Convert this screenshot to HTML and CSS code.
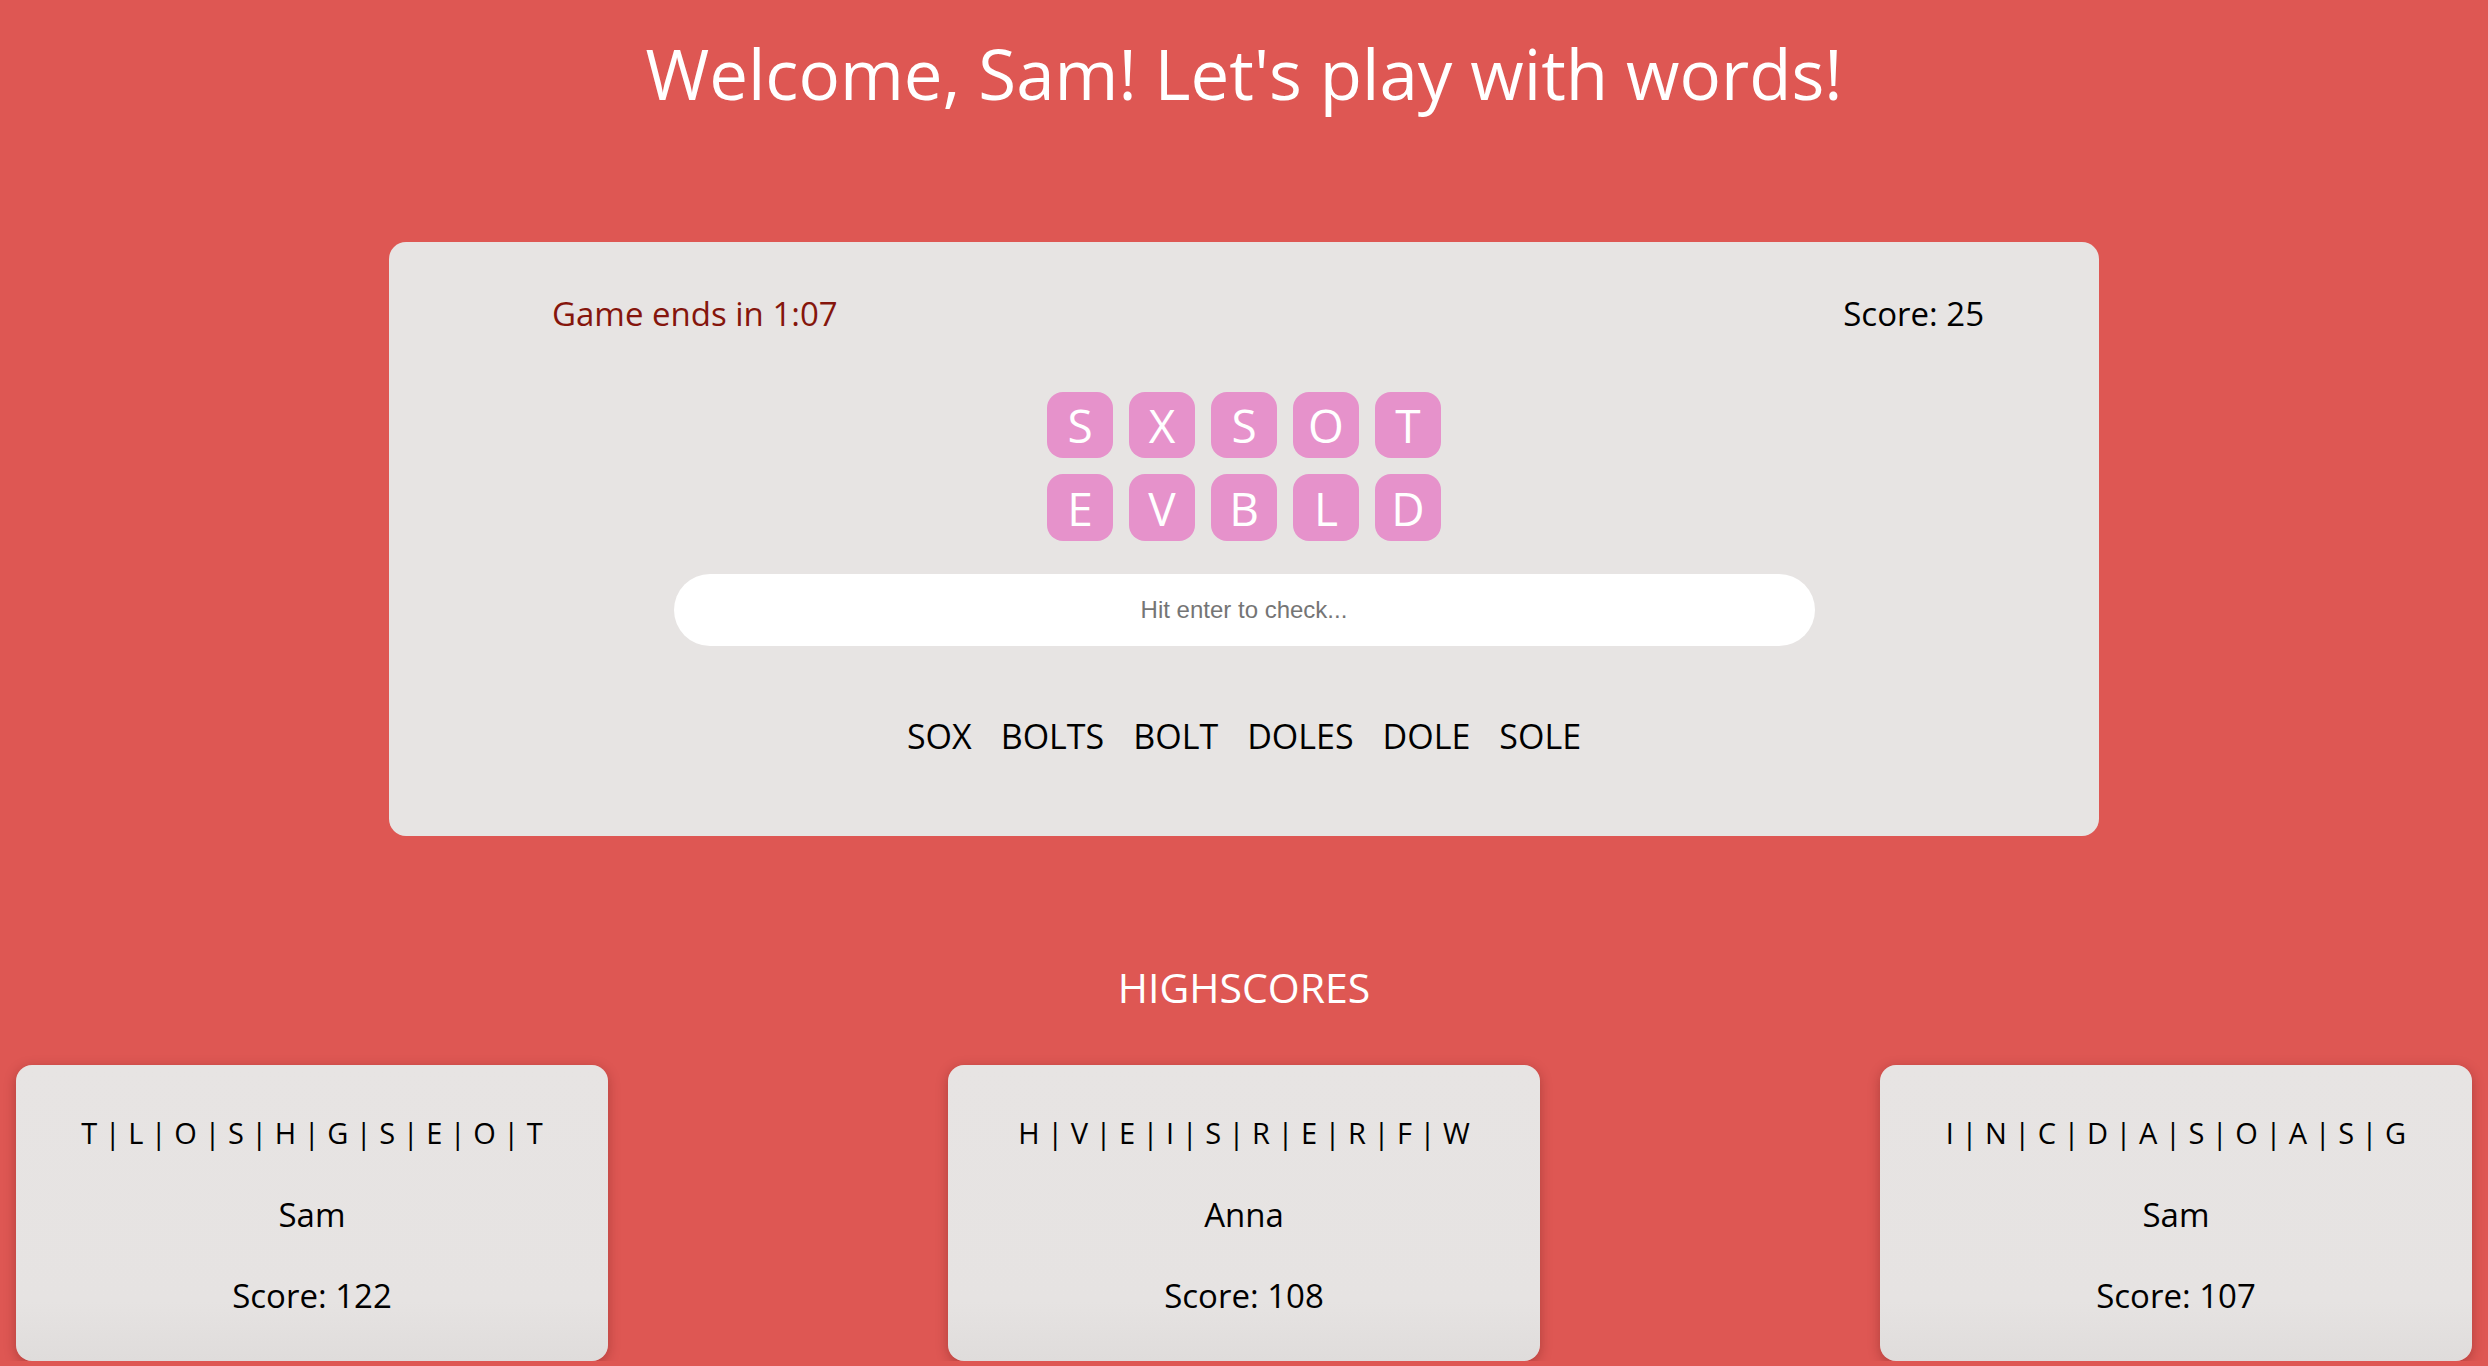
FILE: index.html
```html
<!DOCTYPE html>
<html lang="en">
<head>
<meta charset="utf-8">
<title>Word game</title>
<link rel="stylesheet" href="styles.css">
</head>
<body>
  <h1 class="title">Welcome, Sam! Let's play with words!</h1>

  <main class="game">
    <div class="game-head">
      <span class="timer">Game ends in 1:07</span>
      <span class="score">Score: 25</span>
    </div>
    <div class="tiles">
      <div class="tile-row">
        <span class="tile">S</span>
        <span class="tile">X</span>
        <span class="tile">S</span>
        <span class="tile">O</span>
        <span class="tile">T</span>
      </div>
      <div class="tile-row">
        <span class="tile">E</span>
        <span class="tile">V</span>
        <span class="tile">B</span>
        <span class="tile">L</span>
        <span class="tile">D</span>
      </div>
    </div>
    <input class="guess" type="text" placeholder="Hit enter to check...">
    <ul class="words">
      <li>SOX</li>
      <li>BOLTS</li>
      <li>BOLT</li>
      <li>DOLES</li>
      <li>DOLE</li>
      <li>SOLE</li>
    </ul>
  </main>

  <h2 class="hs-title">HIGHSCORES</h2>

  <section class="hs-list">
    <div class="hs-card">
      <div class="hs-letters">T | L | O | S | H | G | S | E | O | T</div>
      <div class="hs-name">Sam</div>
      <div class="hs-score">Score: 122</div>
    </div>
    <div class="hs-card">
      <div class="hs-letters">H | V | E | I | S | R | E | R | F | W</div>
      <div class="hs-name">Anna</div>
      <div class="hs-score">Score: 108</div>
    </div>
    <div class="hs-card">
      <div class="hs-letters">I | N | C | D | A | S | O | A | S | G</div>
      <div class="hs-name">Sam</div>
      <div class="hs-score">Score: 107</div>
    </div>
  </section>
</body>
</html>
```

FILE: styles.css
```css
html, body {
  margin: 0;
  padding: 0;
}

body {
  background: #de5753;
  font-family: "Open Sans", "Noto Sans", sans-serif;
  color: #000;
  overflow: hidden;
}

.title {
  margin: 33px 0 0;
  font-size: 69px;
  line-height: 80px;
  font-weight: 400;
  color: #fff;
  text-align: center;
}

.game {
  width: 1710px;
  box-sizing: border-box;
  margin: 129px auto 0;
  padding: 52px 0 80px;
  background: #e7e4e3;
  border-radius: 17px;
  display: flex;
  flex-direction: column;
  align-items: center;
}

.game-head {
  align-self: stretch;
  display: flex;
  justify-content: space-between;
  padding: 0 115px 0 163px;
  font-size: 33px;
  line-height: 40px;
}

.timer {
  color: #85150c;
}

.tiles {
  margin-top: 58px;
  display: flex;
  flex-direction: column;
  gap: 16px;
}

.tile-row {
  display: flex;
  gap: 16px;
}

.tile {
  width: 66px;
  height: 66px;
  border-radius: 16px;
  background: #e692cb;
  color: #fff;
  font-size: 46px;
  display: flex;
  align-items: center;
  justify-content: center;
}

.tile-row + .tile-row .tile {
  height: 67px;
}

.guess {
  margin-top: 33px;
  width: 1141px;
  height: 72px;
  box-sizing: border-box;
  border: none;
  border-radius: 36px;
  background: #fff;
  outline: none;
  text-align: center;
  font-family: "Liberation Sans", Arial, sans-serif;
  font-size: 24px;
  color: #333;
}

.guess::placeholder {
  color: #757575;
}

.words {
  list-style: none;
  margin: 70px 0 0;
  padding: 0;
  display: flex;
  gap: 29px;
  font-size: 34px;
  line-height: 40px;
}

.hs-title {
  margin: 127px 0 0;
  font-size: 41px;
  line-height: 48px;
  font-weight: 400;
  color: #fff;
  text-align: center;
}

.hs-list {
  margin-top: 54px;
  padding: 0 16px;
  display: flex;
  justify-content: space-between;
}

.hs-card {
  width: 592px;
  height: 296px;
  box-sizing: border-box;
  padding-top: 48px;
  border-radius: 16px;
  background: linear-gradient(to bottom, #e7e4e3 0%, #e6e3e2 80%, #dfdcdb 100%);
  box-shadow: 0 3px 12px rgba(90, 20, 20, 0.35);
  display: flex;
  flex-direction: column;
  align-items: center;
  text-align: center;
}

.hs-letters {
  font-size: 29px;
  line-height: 40px;
}

.hs-name {
  margin-top: 42px;
  font-size: 33px;
  line-height: 40px;
}

.hs-score {
  margin-top: 41px;
  font-size: 33px;
  line-height: 40px;
}
```
